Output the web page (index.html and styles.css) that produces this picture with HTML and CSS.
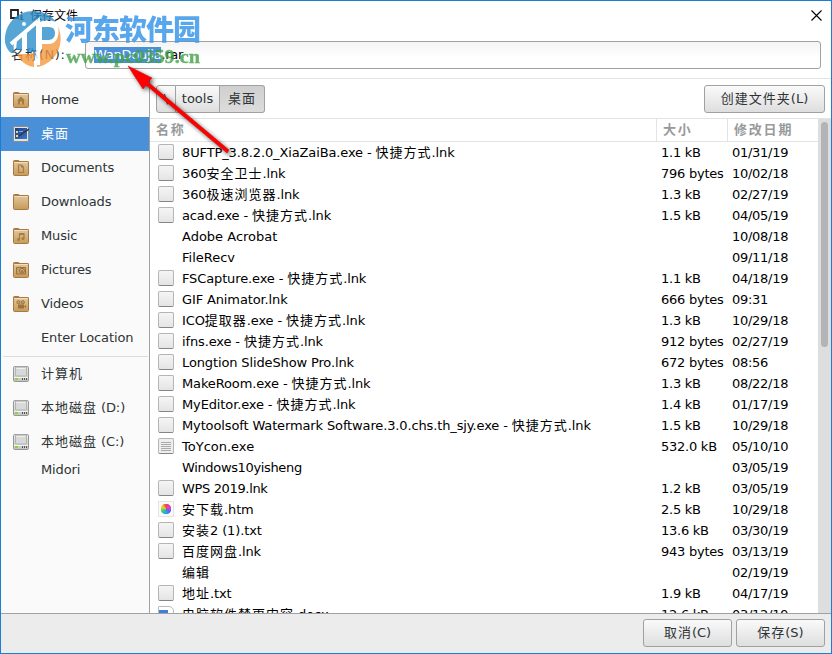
FILE: index.html
```html
<!DOCTYPE html>
<html lang="zh-CN">
<head>
    <meta charset="UTF-8">
    <meta name="viewport" content="width=device-width, initial-scale=1.0">
    <title>保存文件</title>
    <link rel="stylesheet" href="styles.css">
</head>
<body>
    <svg class="defs" width="0" height="0">
        <defs>
            <linearGradient id="tan" x1="0" y1="0" x2="0" y2="1">
                <stop offset="0" stop-color="#e2c79c"/>
                <stop offset="1" stop-color="#c79a5c"/>
            </linearGradient>
            <linearGradient id="metal" x1="0" y1="0" x2="0" y2="1">
                <stop offset="0" stop-color="#ececec"/>
                <stop offset="1" stop-color="#c4c4c4"/>
            </linearGradient>
            <linearGradient id="screen" x1="0" y1="0" x2="1" y2="1">
                <stop offset="0" stop-color="#1c3f86"/>
                <stop offset="1" stop-color="#3a76cf"/>
            </linearGradient>
        </defs>
        <symbol id="folder" viewBox="0 0 16 16">
            <path d="M.5 3V1.200q0-.7.7-.7h4.300q.7 0 .9 1h8.400q.7 0 .7.7V3z" fill="#c79a5c" stroke="#a87a42"/>
            <rect x=".5" y="1.500" width="15" height="14" rx="1" fill="url(#tan)" stroke="#a87a42"/>
            <path d="M1.500 2.500h13" stroke="#f0dfc1"/>
        </symbol>
        <symbol id="drive" viewBox="0 0 16 16">
            <rect x=".5" y=".5" width="15" height="15" rx="1.300" fill="url(#metal)" stroke="#969696"/>
            <path d="M2.500 1v8q0 1 1 1h9q1 0 1-1V1z" fill="#d8d8d8" stroke="#b4b4b4"/>
            <path d="M3.500 2.500h9" stroke="#f0f0f0"/>
            <path d="M1 11.500h14" stroke="#f4f4f4"/>
            <path d="M2 12h3v2h-3z" fill="#8ad62d"/>
            <path d="M9 12h1v2h-1zM11 12h1v2h-1zM13 12h1v2h-1z" fill="#555"/>
        </symbol>
    </svg>

    <div class="window">
        <header class="titlebar">
            <svg class="app-icon" width="15" height="14" viewBox="0 0 15 14">
                <path d="M2 2h7v8H2z" fill="#fff" stroke="#222" stroke-width="1.800"/>
                <path d="M12 4h1v1h-1zM12 7h1v4h-1zM10.500 11.500h4" fill="#222" stroke="#333"/>
            </svg>
            <h1>保存文件</h1>
            <svg class="close" width="11" height="11" viewBox="0 0 11 11">
                <path d="M.5.5l10 10M10.500.5l-10 10" stroke="#000" stroke-width="1.100"/>
            </svg>
        </header>

        <div class="name-row">
            <label class="name-label"><span class="zh">名称</span>(N):</label>
            <div class="name-input"><span class="selected">WanDoujia</span>.rar</div>
        </div>

        <div class="content">
            <nav class="sidebar">
                <div class="place">
                    <svg width="16" height="16"><use href="#folder"/><path d="M8 4.500l-4 4h1v4h6v-4h1z" fill="#a67c42"/><path d="M7 9.500h2v3H7z" fill="#d4b07b"/></svg>
                    Home
                </div>
                <div class="place active">
                    <svg width="16" height="16"><rect x=".5" y=".5" width="15" height="15" rx="1.300" fill="#e3e3e0" stroke="#8b8b88"/><path d="M2 2h12v11H2z" fill="url(#screen)"/><path d="M3 5h2v2H3zM3 9h2v2H3z" fill="#e8d96a"/><path d="M6 10l4-3 6-4" stroke="#333" stroke-width="1.500" fill="none"/><path d="M6 5.500h4" stroke="#7ea7e0"/></svg>
                    <span class="zh">桌面</span>
                </div>
                <div class="place">
                    <svg width="16" height="16"><use href="#folder"/><path d="M5.500 5h3l2 2v5.500h-5zM8.500 5v2h2" fill="none" stroke="#a67c42" stroke-width="1.200"/></svg>
                    Documents
                </div>
                <div class="place">
                    <svg width="16" height="16"><use href="#folder"/></svg>
                    Downloads
                </div>
                <div class="place">
                    <svg width="16" height="16"><use href="#folder"/><path d="M6.500 11V5.500h4.500V10M6.500 6.500H11" fill="none" stroke="#a67c42" stroke-width="1.200"/><circle cx="5.500" cy="11.500" r="1.500" fill="#a67c42"/><circle cx="10" cy="10.500" r="1.500" fill="#a67c42"/></svg>
                    Music
                </div>
                <div class="place">
                    <svg width="16" height="16"><use href="#folder"/><path d="M3.500 5.500h3V5h1v.5h5v6.500h-9z" fill="#c59f66" stroke="#9d733c"/><circle cx="9" cy="8.700" r="2.300" fill="#dcbd8c" stroke="#8f672f"/><path d="M9 8v2M8 9h2" stroke="#8f672f"/></svg>
                    Pictures
                </div>
                <div class="place">
                    <svg width="16" height="16"><use href="#folder"/><path d="M5 8.500h6v4H5zM11 10.500l2-1.500v3z" fill="#9d733c"/><circle cx="5.500" cy="6.300" r="1.600" fill="#c59f66" stroke="#9d733c"/><circle cx="9.800" cy="6.300" r="1.600" fill="#c59f66" stroke="#9d733c"/></svg>
                    Videos
                </div>
                <div class="place no-icon">Enter Location</div>
                <hr>
                <div class="place">
                    <svg width="16" height="16"><use href="#drive"/></svg>
                    <span class="zh">计算机</span>
                </div>
                <div class="place">
                    <svg width="16" height="16"><use href="#drive"/></svg>
                    <span><span class="zh">本地磁盘</span> (D:)</span>
                </div>
                <div class="place">
                    <svg width="16" height="16"><use href="#drive"/></svg>
                    <span><span class="zh">本地磁盘</span> (C:)</span>
                </div>
                <div class="place no-icon short">Midori</div>
            </nav>

            <main class="browser">
                <div class="toolbar">
                    <div class="path">
                        <button class="root">\</button>
                        <button class="dir">tools</button>
                        <button class="current"><span class="zh">桌面</span></button>
                    </div>
                    <button class="btn create"><span class="zh">创建文件夹</span>(L)</button>
                </div>

                <div class="files">
                    <div class="list">
                        <div class="row head">
                            <div class="name">名称</div>
                            <div class="size">大小</div>
                            <div class="date">修改日期</div>
                        </div>
                        <div class="row"><i class="file"></i><div class="name">8UFTP_3.8.2.0_XiaZaiBa.exe - <span class="zh">快捷方式</span>.lnk</div><div class="size">1.1 kB</div><div class="date">01/31/19</div></div>
                        <div class="row"><i class="file"></i><div class="name">360<span class="zh">安全卫士</span>.lnk</div><div class="size">796 bytes</div><div class="date">10/02/18</div></div>
                        <div class="row"><i class="file"></i><div class="name">360<span class="zh">极速浏览器</span>.lnk</div><div class="size">1.3 kB</div><div class="date">02/27/19</div></div>
                        <div class="row"><i class="file"></i><div class="name">acad.exe - <span class="zh">快捷方式</span>.lnk</div><div class="size">1.5 kB</div><div class="date">04/05/19</div></div>
                        <div class="row"><i></i><div class="name loose">Adobe Acrobat</div><div class="size"></div><div class="date">10/08/18</div></div>
                        <div class="row"><i></i><div class="name loose">FileRecv</div><div class="size"></div><div class="date">09/11/18</div></div>
                        <div class="row"><i class="file"></i><div class="name">FSCapture.exe - <span class="zh">快捷方式</span>.lnk</div><div class="size">1.1 kB</div><div class="date">04/18/19</div></div>
                        <div class="row"><i class="file"></i><div class="name">GIF Animator.lnk</div><div class="size">666 bytes</div><div class="date">09:31</div></div>
                        <div class="row"><i class="file"></i><div class="name">ICO<span class="zh">提取器</span>.exe - <span class="zh">快捷方式</span>.lnk</div><div class="size">1.3 kB</div><div class="date">10/29/18</div></div>
                        <div class="row"><i class="file"></i><div class="name">ifns.exe - <span class="zh">快捷方式</span>.lnk</div><div class="size">912 bytes</div><div class="date">02/27/19</div></div>
                        <div class="row"><i class="file"></i><div class="name">Longtion SlideShow Pro.lnk</div><div class="size">672 bytes</div><div class="date">08:56</div></div>
                        <div class="row"><i class="file"></i><div class="name">MakeRoom.exe - <span class="zh">快捷方式</span>.lnk</div><div class="size">1.3 kB</div><div class="date">08/22/18</div></div>
                        <div class="row"><i class="file"></i><div class="name">MyEditor.exe - <span class="zh">快捷方式</span>.lnk</div><div class="size">1.4 kB</div><div class="date">01/17/19</div></div>
                        <div class="row"><i class="file"></i><div class="name">Mytoolsoft Watermark Software.3.0.chs.th_sjy.exe - <span class="zh">快捷方式</span>.lnk</div><div class="size">1.5 kB</div><div class="date">10/29/18</div></div>
                        <div class="row"><i class="file text"></i><div class="name loose">ToYcon.exe</div><div class="size">532.0 kB</div><div class="date">05/10/10</div></div>
                        <div class="row"><i></i><div class="name tight">Windows10yisheng</div><div class="size"></div><div class="date">03/05/19</div></div>
                        <div class="row"><i class="file"></i><div class="name tight">WPS 2019.lnk</div><div class="size">1.2 kB</div><div class="date">03/05/19</div></div>
                        <div class="row"><i class="html"></i><div class="name"><span class="zh">安下载</span>.htm</div><div class="size">2.5 kB</div><div class="date">10/29/18</div></div>
                        <div class="row"><i class="file"></i><div class="name"><span class="zh">安装</span>2 (1).txt</div><div class="size">13.6 kB</div><div class="date">03/30/19</div></div>
                        <div class="row"><i class="file"></i><div class="name"><span class="zh">百度网盘</span>.lnk</div><div class="size">943 bytes</div><div class="date">03/13/19</div></div>
                        <div class="row"><i></i><div class="name"><span class="zh">编辑</span></div><div class="size"></div><div class="date">02/19/19</div></div>
                        <div class="row"><i class="file"></i><div class="name"><span class="zh">地址</span>.txt</div><div class="size">1.9 kB</div><div class="date">04/17/19</div></div>
                        <div class="row"><i class="doc"></i><div class="name"><span class="zh">电脑软件禁更内容</span>.docx</div><div class="size">12.6 kB</div><div class="date">03/12/19</div></div>
                    </div>
                    <div class="scrollbar"><div class="thumb"></div></div>
                </div>
            </main>
        </div>

        <footer class="actions">
            <button class="btn"><span class="zh">取消</span>(C)</button>
            <button class="btn"><span class="zh">保存</span>(S)</button>
        </footer>
    </div>

    <!-- site watermark -->
    <svg class="watermark" width="210" height="76" viewBox="0 0 210 76">
        <g opacity=".8">
            <path d="M5 42C4 24 17 11 34 11c9 0 17 4 22 11-7-3-14-2-20 2L14 43c-1 5 0 8 1 10h-4q-5-4-6-11z" fill="#2d8fcb"/>
            <path d="M27 29l9-6v29h-9zM17 40l6-5v15h-7z" fill="#2d8fcb"/>
            <path d="M42 27h7q6 0 6 6t-6 7h-7z" fill="#2d8fcb"/>
            <path d="M58 26c8 19-3 38-21 41V53h5V44h7c7 0 11-7 9-18z" fill="#f59a40"/>
            <path d="M17 54h17v13C26 66 20 61 17 54z" fill="#f59a40"/>
            <path d="M11 44l27-23v44M24 34v17" fill="none" stroke="#fff" stroke-width="4"/>
            <circle cx="24" cy="24" r="2" fill="#fff"/>
        </g>
        <text class="mark-cn" x="65" y="40" textLength="136">河东软件园</text>
        <text class="mark-url" x="66" y="63" textLength="134" lengthAdjust="spacingAndGlyphs">www.pc0359.cn</text>
    </svg>

    <svg class="arrow" width="120" height="106" viewBox="120 60 120 106">
        <path d="M128 66l24 12-4 4 81 68-2 3-81-68-3 4z" fill="#f00" stroke="#c00" stroke-width=".5"/>
    </svg>
</body>
</html>
```
FILE: styles.css
```css
:root {
    --blue: #4a90d9;
    --frame: #1a7fd4;
    --border: #a1a1a1;
    --line: #e3e3e3;
}

* {
    margin: 0;
    padding: 0;
    box-sizing: border-box;
}

body {
    width: 832px;
    height: 654px;
    overflow: hidden;
    position: relative;
    font: 13px/21px "DejaVu Sans", "Noto Sans CJK SC", sans-serif;
    color: #000;
    background: #fff;
}

.defs {
    position: absolute;
}

.zh {
    letter-spacing: 1px;
}

.window {
    display: flex;
    flex-direction: column;
    height: 654px;
    border: 1px solid var(--frame);
}

.titlebar {
    display: flex;
    align-items: center;
    height: 28px;
    padding: 0 9px 0 8px;
}

.titlebar h1 {
    flex: 1;
    margin-left: 6px;
    font: 12px/20px "Noto Sans CJK SC", sans-serif;
}

.name-row {
    display: flex;
    align-items: center;
    height: 50px;
    padding: 2px 10px 0;
    border-bottom: 1px solid var(--line);
}

.name-label {
    width: 74px;
    color: #2e3436;
    letter-spacing: 0.5px;
    white-space: nowrap;
}

.name-input {
    flex: 1;
    height: 28px;
    padding: 4px 8px;
    line-height: 18px;
    letter-spacing: -0.25px;
    border: 1px solid var(--border);
    border-radius: 3px;
    background: linear-gradient(#f4f4f4, #fff 60%);
}

.selected {
    display: inline-block;
    height: 16px;
    line-height: 16px;
    color: #fff;
    background: var(--blue);
}

.content {
    display: flex;
    flex: 1;
    min-height: 0;
}

.sidebar {
    width: 149px;
    padding-top: 4px;
    border-right: 1px solid var(--border);
    background: #fafafa;
    color: #2e3436;
}

.place {
    display: flex;
    align-items: center;
    gap: 12px;
    height: 34px;
    padding: 0 0 2px 12px;
    letter-spacing: -0.12px;
    white-space: nowrap;
}

.place svg {
    margin-top: 2px;
}

.place.active {
    color: #fff;
    background: var(--blue);
}

.place.no-icon {
    padding-left: 40px;
}

.place.short {
    height: 23px;
}

.sidebar hr {
    margin: 1px 1px 0 2px;
    border: 0;
    border-top: 1px solid #dcdcdc;
}

.browser {
    display: flex;
    flex-direction: column;
    flex: 1;
    min-width: 0;
}

.toolbar {
    display: flex;
    justify-content: space-between;
    height: 40px;
    padding: 6px 6px 0;
    border-bottom: 1px solid var(--line);
}

button {
    height: 28px;
    font: inherit;
    line-height: 24px;
    color: #2e3436;
    border: 1px solid var(--border);
    background: linear-gradient(#fafafa, #dedede);
}

.path {
    display: flex;
}

.path .root {
    width: 20px;
    border-radius: 3px 0 0 3px;
}

.path .dir {
    width: 44px;
    border-left: 0;
}

.path .current {
    width: 45px;
    border-left: 0;
    border-radius: 0 3px 3px 0;
    background: linear-gradient(#cfcfcf, #dcdcdc);
}

.btn {
    width: 89px;
    border-radius: 3px;
}

.btn.create {
    width: 121px;
}

.files {
    display: flex;
    flex: 1;
    min-height: 0;
}

.list {
    flex: 1;
    overflow: hidden;
}

.row {
    display: grid;
    grid-template-columns: 24px 474px 71px 1fr;
    height: 21px;
    padding-left: 8px;
    letter-spacing: -0.13px;
    white-space: nowrap;
}

.row .loose {
    letter-spacing: 0;
}

.row .tight {
    letter-spacing: -0.35px;
}

.row .size {
    padding-left: 5px;
    letter-spacing: -0.25px;
}

.row .date {
    padding-left: 5px;
    letter-spacing: -0.27px;
}

.row.head {
    grid-template-columns: 507px 71px 1fr;
    height: 23px;
    padding-left: 0;
    font-weight: bold;
    color: #979a9b;
    border-bottom: 1px solid var(--line);
}

.row.head div {
    padding-left: 6px;
    letter-spacing: 1.8px;
}

.head .name,
.head .size {
    border-right: 1px solid var(--line);
}

.row i {
    width: 16px;
    height: 16px;
    margin-top: 2px;
}

.row .file {
    border: 1px solid #b5b5b5;
    border-bottom-color: #858585;
    border-radius: 2px;
    background: linear-gradient(#f5f5f5, #e4e4e4);
}

.row .text {
    background: repeating-linear-gradient(#aaa 0 1px, #eee 1px 2px) 2px 3px / 10px 9px no-repeat #eee;
}

.row .html {
    border: 1px solid #e4e4e4;
    background:
        radial-gradient(circle at 7px 7px, transparent 5px, #fafafa 5.5px),
        conic-gradient(#f4443e, #e740c4, #6b5cf0, #23a6ef, #38cf72, #f5d22c, #f4443e);
}

.row .doc {
    border: 1px solid #b9b9b9;
    border-radius: 1px 5px 1px 1px;
    background: linear-gradient(#3f7ee0, #3f7ee0) 0 3px / 9px 9px no-repeat #fff;
}

.scrollbar {
    width: 13px;
    padding: 3px 3px 0;
    background: #dedede;
}

.thumb {
    height: 225px;
    border-radius: 4px;
    background: #b2b4b6;
}

.actions {
    display: flex;
    justify-content: flex-end;
    gap: 4px;
    height: 40px;
    padding: 5px 6px;
    border-top: 1px solid var(--border);
    background: #ececec;
}

.watermark {
    position: absolute;
    top: 0;
    left: 0;
}

.mark-cn {
    font: 900 28px "Noto Sans CJK SC", sans-serif;
    fill: #3b97e8;
    opacity: 0.85;
}

.mark-url {
    font: bold 18px "Liberation Serif", serif;
    fill: #43a047;
    stroke: #43a047;
    stroke-width: 0.4px;
    opacity: 0.8;
}

.arrow {
    position: absolute;
    top: 60px;
    left: 120px;
    filter: drop-shadow(2px 2px 2px rgba(0, 0, 0, 0.6));
}
```
